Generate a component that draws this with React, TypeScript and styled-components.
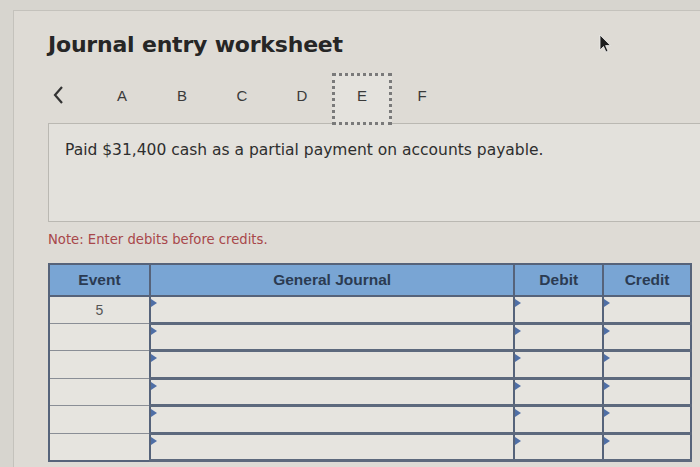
import React from "react";
import styled, { createGlobalStyle } from "styled-components";

const GlobalStyle = createGlobalStyle`
  html, body {
    margin: 0;
    padding: 0;
    background: #d7d5cf;
    overflow: hidden;
  }
  body {
    width: 700px;
    height: 467px;
  }
`;

const Panel = styled.div`
  position: relative;
  margin: 10px 0 0 13px;
  height: 457px;
  box-sizing: border-box;
  padding: 21px 0 0 34px;
  background: #dedbd5;
  border-top: 1px solid #c4c2bc;
  border-left: 1px solid #c4c2bc;
  font-family: "DejaVu Sans", Verdana, sans-serif;
`;

const Title = styled.h1`
  margin: 0;
  font-size: 22px;
  line-height: 26px;
  font-weight: bold;
  color: #262626;
  letter-spacing: -0.2px;
`;

const Pointer = styled.svg`
  position: absolute;
  left: 584px;
  top: 23px;
`;

const Nav = styled.div`
  display: flex;
  align-items: center;
  height: 50px;
  margin-top: 15px;
  font-family: "Liberation Sans", Arial, sans-serif;
  font-size: 15px;
  color: #3a3a3a;
`;

const Back = styled.div`
  width: 40px;
  padding: 0 0 6px 4px;
  display: flex;
  align-items: center;
`;

const Tab = styled.div<{ $active?: boolean }>`
  width: 60px;
  height: 52px;
  box-sizing: border-box;
  display: flex;
  align-items: center;
  justify-content: center;
  padding-bottom: ${(p) => (p.$active ? "8px" : "6px")};
  margin-top: ${(p) => (p.$active ? "2px" : "0")};
  border: ${(p) => (p.$active ? "3px dotted #7a7a7a" : "3px solid transparent")};
  background: ${(p) => (p.$active ? "#e4e2dd" : "transparent")};
  position: relative;
  z-index: 1;
`;

const Description = styled.div`
  height: 99px;
  box-sizing: border-box;
  padding: 17px 0 0 16px;
  background: #e3e1dc;
  border: 1px solid #bab8b2;
  border-right: none;
  font-size: 15.5px;
  color: #2e2e2e;
`;

const Note = styled.p`
  margin: 10px 0 0;
  font-size: 13.2px;
  line-height: 16px;
  color: #a8474a;
`;

const Table = styled.table`
  margin-top: 15px;
  width: 644px;
  border-collapse: collapse;
  table-layout: fixed;
  font-family: "Liberation Sans", Arial, sans-serif;
  border: 2px solid #56637a;
`;

const Head = styled.th`
  height: 30px;
  background: #79a5d4;
  color: #2b3b52;
  font-size: 15.5px;
  font-weight: bold;
  border-left: 2px solid #56637a;
  border-bottom: 2px solid #56637a;
  padding: 0;
  &:first-child {
    border-left: none;
  }
`;

const EventCell = styled.td`
  height: 24.5px;
  padding: 0;
  text-align: center;
  font-size: 14px;
  color: #555;
  background: #e6e4df;
  border-bottom: 1px solid #8a8e96;
`;

const InputCell = styled.td`
  position: relative;
  height: 24.5px;
  padding: 0;
  background: #e6e4df;
  border-left: 2px solid #56637a;
  border-bottom: 3px solid #5d697d;
  &::before {
    content: "";
    position: absolute;
    left: 0;
    top: 2px;
    border-top: 4px solid transparent;
    border-bottom: 4px solid transparent;
    border-left: 6px solid #4f6fa6;
  }
`;

const rows = ["5", "", "", "", "", ""];
const columns = [
  { label: "Event", width: 100 },
  { label: "General Journal", width: 361 },
  { label: "Debit", width: 88 },
  { label: "Credit", width: 87 },
];

export default function App() {
  return (
    <>
      <GlobalStyle />
      <Panel>
        <Title>Journal entry worksheet</Title>
        <Pointer width="14" height="20" viewBox="0 0 14 20">
          <path d="M2 1 L2 16 L5.5 12.5 L8 18 L10 17 L7.6 11.6 L12.5 11.6 Z" fill="#1d1d1d" stroke="#f0f0f0" strokeWidth="0.8" />
        </Pointer>
        <Nav>
          <Back>
            <svg width="13" height="20" viewBox="0 0 13 20">
              <path d="M10 2 L3 10 L10 18" fill="none" stroke="#333" strokeWidth="2.2" />
            </svg>
          </Back>
          {["A", "B", "C", "D", "E", "F"].map((l) => (
            <Tab key={l} $active={l === "E"}>
              {l}
            </Tab>
          ))}
        </Nav>
        <Description>Paid $31,400 cash as a partial payment on accounts payable.</Description>
        <Note>Note: Enter debits before credits.</Note>
        <Table>
          <colgroup>
            {columns.map((c) => (
              <col key={c.label} style={{ width: c.width }} />
            ))}
          </colgroup>
          <thead>
            <tr>
              {columns.map((c) => (
                <Head key={c.label}>{c.label}</Head>
              ))}
            </tr>
          </thead>
          <tbody>
            {rows.map((ev, i) => (
              <tr key={i}>
                <EventCell>{ev}</EventCell>
                <InputCell />
                <InputCell />
                <InputCell />
              </tr>
            ))}
          </tbody>
        </Table>
      </Panel>
    </>
  );
}
